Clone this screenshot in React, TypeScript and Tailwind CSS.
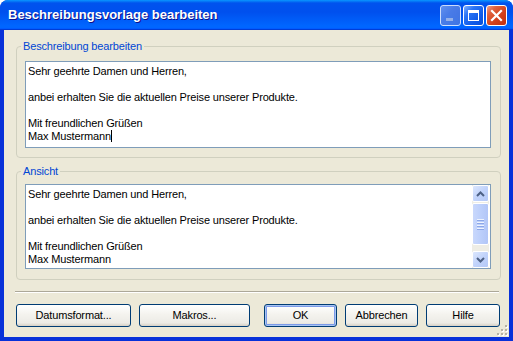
const brief = [
  "Sehr geehrte Damen und Herren,",
  "",
  "anbei erhalten Sie die aktuellen Preise unserer Produkte.",
  "",
  "Mit freundlichen Grüßen",
  "Max Mustermann",
];

const font = { fontFamily: '"Liberation Sans", Arial, sans-serif', letterSpacing: "-0.15px" };

function TitleButton({ kind }: { kind: "min" | "max" | "close" }) {
  const bg =
    kind === "close"
      ? "bg-[linear-gradient(135deg,#f0a08a_0%,#e0623e_25%,#d4411c_60%,#c2300e_100%)]"
      : kind === "min"
      ? "bg-[linear-gradient(135deg,#7aa2f0_0%,#5c86e6_40%,#4f79dd_100%)] opacity-80"
      : "bg-[linear-gradient(135deg,#7fb0ff_0%,#2a74f5_30%,#0f5ae8_70%,#0a4fd8_100%)]";
  return (
    <div className={`w-[21px] h-[21px] rounded-[3px] border border-white flex items-center justify-center ${bg}`}>
      {kind === "min" && <div className="w-[7px] h-[3px] bg-[#b9c6e6] mt-[8px] -ml-[3px]" />}
      {kind === "max" && (
        <div className="w-[11px] h-[11px] border border-white border-t-[3px]" />
      )}
      {kind === "close" && (
        <svg width="13" height="13" viewBox="0 0 13 13">
          <path d="M2 2 L11 11 M11 2 L2 11" stroke="white" strokeWidth="2.2" strokeLinecap="square" />
        </svg>
      )}
    </div>
  );
}

function XpButton({ label, width, primary }: { label: string; width: string; primary?: boolean }) {
  return (
    <button
      className={`${width} h-[23px] rounded-[3px] border border-[#003c74] bg-[linear-gradient(180deg,#ffffff_0%,#f4f3ee_45%,#ecebe6_85%,#d6d0c5_100%)] text-[11px] text-black ${
        primary ? "shadow-[inset_0_0_0_1px_#a8c4f2,inset_0_0_0_2px_#7b9ae8]" : ""
      }`}
      style={font}
    >
      {label}
    </button>
  );
}

function Lines({ caret }: { caret?: boolean }) {
  return (
    <div className="pl-[2px] pt-[3px] text-[11px] leading-[13px] text-black" style={font}>
      {brief.map((l, i) => (
        <div key={i} className="h-[13px] whitespace-pre">
          {l}
          {caret && i === brief.length - 1 && (
            <span className="inline-block w-px h-[12px] bg-black align-[-2px]" />
          )}
        </div>
      ))}
    </div>
  );
}

function Arrow({ up }: { up?: boolean }) {
  return (
    <div className="h-[17px] rounded-[2px] border border-white bg-[linear-gradient(135deg,#dce7fd_0%,#c1d3fb_50%,#b4c8f6_100%)] flex items-center justify-center">
      <svg width="9" height="6" viewBox="0 0 9 6">
        <path d={up ? "M1 5 L4.5 1.5 L8 5" : "M1 1 L4.5 4.5 L8 1"} fill="none" stroke="#4d6185" strokeWidth="2" />
      </svg>
    </div>
  );
}

function Scrollbar() {
  return (
    <div className="w-[17px] h-full flex flex-col bg-[#eeede5]">
      <Arrow up />
      <div className="mt-[1px] h-[42px] rounded-[2px] border border-white bg-[linear-gradient(90deg,#c9d8fc_0%,#bccffb_50%,#b2c6f7_100%)] flex flex-col items-center justify-center gap-[2px]">
        <div className="w-[7px] h-px bg-[#eef3fe] shadow-[0_1px_0_#8ca7e8]" />
        <div className="w-[7px] h-px bg-[#eef3fe] shadow-[0_1px_0_#8ca7e8]" />
        <div className="w-[7px] h-px bg-[#eef3fe] shadow-[0_1px_0_#8ca7e8]" />
        <div className="w-[7px] h-px bg-[#eef3fe] shadow-[0_1px_0_#8ca7e8]" />
      </div>
      <div className="flex-1" />
      <Arrow />
    </div>
  );
}

export default function App() {
  return (
    <div className="w-[513px] h-[341px] flex flex-col rounded-t-[8px] bg-[#0831d9] overflow-hidden">
      {/* Titelleiste */}
      <div className="h-[30px] shrink-0 flex items-center pl-[8px] pr-[6px] bg-[linear-gradient(180deg,#0997ff_0%,#0053ee_10%,#0050ee_40%,#0066ff_86%,#0066ff_92%,#005bff_95%,#003dd7_97%,#003dd7_100%)]">
        <div
          className="flex-1 text-white font-bold text-[13px] [text-shadow:1px_1px_#0f1089]"
          style={{ fontFamily: '"Liberation Sans", Arial, sans-serif' }}
        >
          Beschreibungsvorlage bearbeiten
        </div>
        <div className="flex gap-[2px] mt-[1px]">
          <TitleButton kind="min" />
          <TitleButton kind="max" />
          <TitleButton kind="close" />
        </div>
      </div>

      {/* Inhalt */}
      <div className="flex-1 mx-[4px] mb-[4px] bg-[#ece9d8] flex flex-col relative">
        <fieldset className="mt-[10px] ml-[12px] mr-[8px] border border-[#d0d0bf] rounded-[4px] pl-[8px] pr-[9px] pt-[8px] pb-[9px]">
          <legend className="-ml-[4px] px-[2px] text-[11px] leading-[13px] text-[#0046d5]" style={font}>
            Beschreibung bearbeiten
          </legend>
          <div className="h-[87px] border border-[#7f9db9] bg-white">
            <Lines caret />
          </div>
        </fieldset>

        <fieldset className="mt-[7px] ml-[12px] mr-[8px] border border-[#d0d0bf] rounded-[4px] pl-[8px] pr-[9px] pt-[6px] pb-[10px]">
          <legend className="-ml-[4px] px-[2px] text-[11px] leading-[13px] text-[#0046d5]" style={font}>
            Ansicht
          </legend>
          <div className="h-[85px] border border-[#7f9db9] bg-white flex">
            <div className="flex-1">
              <Lines />
            </div>
            <div className="pr-[1px] h-full">
              <Scrollbar />
            </div>
          </div>
        </fieldset>

        <div className="mt-[11px] ml-[11px] mr-[10px] h-[2px] border-t border-[#aca899] border-b border-b-white" />

        <div className="mt-[11px] ml-[12px] mr-[9px] flex">
          <XpButton label="Datumsformat..." width="w-[115px]" />
          <div className="w-[8px]" />
          <XpButton label="Makros..." width="w-[111px]" />
          <div className="flex-1" />
          <XpButton label="OK" width="w-[73px]" primary />
          <div className="w-[8px]" />
          <XpButton label="Abbrechen" width="w-[73px]" />
          <div className="w-[8px]" />
          <XpButton label="Hilfe" width="w-[74px]" />
        </div>

        {/* Größengriff */}
        <svg className="absolute right-[1px] bottom-[1px]" width="12" height="12" viewBox="0 0 12 12">
          {[
            [10, 2], [10, 6], [10, 10], [6, 6], [6, 10], [2, 10],
          ].map(([x, y], i) => (
            <g key={i}>
              <rect x={x} y={y} width="2" height="2" fill="#fff" />
              <rect x={x - 1} y={y - 1} width="2" height="2" fill="#b5b2a5" />
            </g>
          ))}
        </svg>
      </div>
    </div>
  );
}
